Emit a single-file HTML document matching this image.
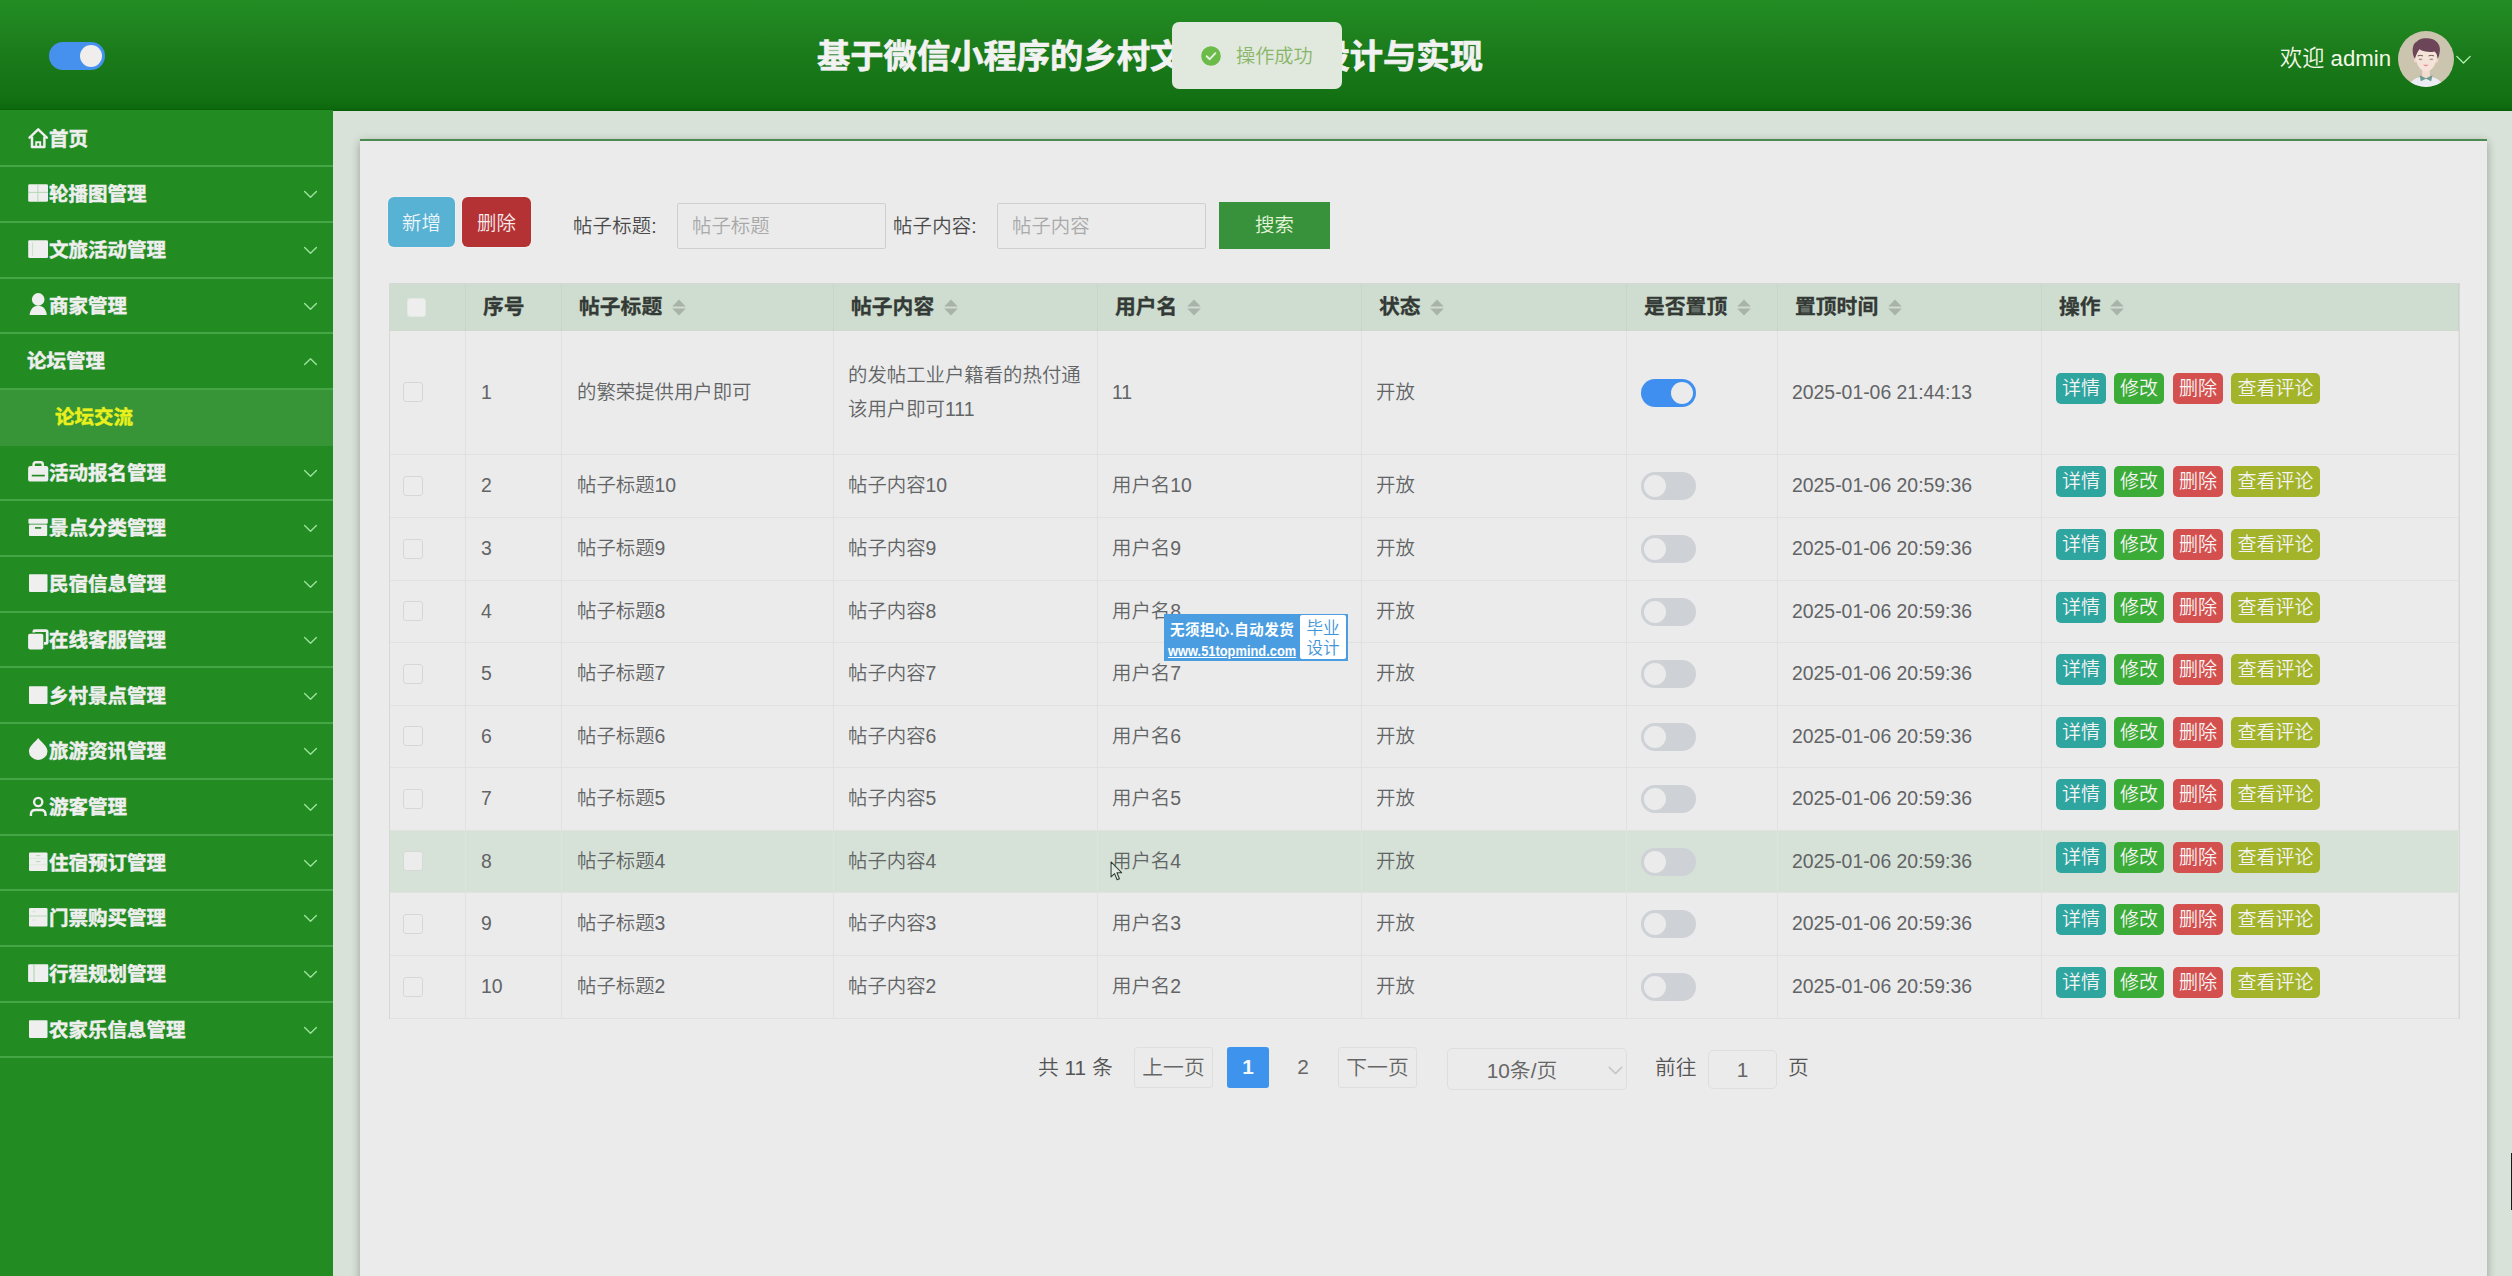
<!DOCTYPE html>
<html lang="zh-CN"><head><meta charset="utf-8"><title>论坛交流</title>
<style>
*{box-sizing:border-box;margin:0;padding:0}
html,body{width:2512px;height:1276px;overflow:hidden;background:#d8e2d8;font-family:"Liberation Sans","Noto Sans CJK SC",sans-serif;}
body{position:relative;font-size:19.4px;color:#606266;font-weight:350}
#root{position:absolute;left:0;top:0;width:2512px;height:1276px;overflow:hidden;background:#d8e2d8}
.abs{position:absolute}
#hdr{position:absolute;left:0;top:0;width:2512px;height:111px;background:linear-gradient(180deg,#238c23 0%,#228a22 10%,#1b7b1b 48%,#137113 88%,#0d690d 97.5%,#075a07 100%);}
#title{position:absolute;left:817px;top:32px;-webkit-text-stroke:0.7px #f2f2f2;height:50px;line-height:50px;font-size:33.3px;font-weight:bold;color:#f2f2f2;white-space:nowrap;letter-spacing:0}
#welcome{position:absolute;left:2280px;top:40px;height:38px;line-height:38px;font-size:22.2px;color:#f4f8e8;white-space:nowrap}
#avatar{position:absolute;left:2398px;top:31px;width:56px;height:56px}
.sw{position:absolute;border-radius:14px;width:55px;height:28px}
.sw i{position:absolute;top:3px;width:22px;height:22px;border-radius:50%;background:#ebebeb}
.sw.on{background:#3f8ff0}
.sw.on i{right:3px}
.sw.off{background:#ced1d6}
.sw.off i{left:3px}
#side{position:absolute;left:0;top:110px;width:333px;height:1166px;background:#228b22}
.mi{position:absolute;left:0;width:333px;height:56px;border-bottom:2px solid #45a645;color:#efefef;font-weight:bold;font-size:19.5px;white-space:nowrap;-webkit-text-stroke:0.45px #efefef}
.mi .ic{position:absolute;left:27.8px;top:13px;width:21px;height:24px}
.mi .tx{position:absolute;left:49px;top:0;line-height:55px;height:55px}
.mi .ch{position:absolute;left:303px;top:23px;width:15px;height:9px}
#sub{position:absolute;left:0;top:390px;width:333px;height:55px;background:#379537;color:#eaf01c;font-weight:bold;font-size:19.5px;-webkit-text-stroke:0.45px #eaf01c}
#sub span{position:absolute;left:55px;top:0;line-height:55px}
#card{position:absolute;left:360px;top:139px;width:2127px;height:1160px;background:#ebebeb;border-top:2px solid #4b8a50;box-shadow:0 3px 9px rgba(0,0,0,.3)}
.btn{position:absolute;color:#fff;text-align:center;white-space:nowrap}
.inp{position:absolute;height:46px;border:1px solid #cfcfcf;border-radius:2px;background:#ebebeb;color:#a9a9a9;font-size:19.4px;line-height:45px;padding-left:14px;white-space:nowrap}
.lbl{position:absolute;height:48px;line-height:48px;font-size:19.4px;color:#4a4a4a;letter-spacing:0.2px;white-space:nowrap}
#tbl{position:absolute;left:389px;top:283px;width:2071px;height:736px;border:1px solid #d6d8d6;}
.row{position:absolute;left:0;width:2069px;border-bottom:1px solid #e0e2e0}
.cell{position:absolute;top:0;height:100%;border-right:1px solid #e0e2e0}
.th{position:absolute;top:0;height:47px;line-height:46px;font-weight:bold;color:#343a36;-webkit-text-stroke:0.3px #343a36;font-size:20.8px;white-space:nowrap;border-right:1px solid #c8d5c9}
.th .t{position:absolute;left:17px;top:0}
.td{position:absolute;white-space:nowrap;font-size:19.4px;color:#626466;line-height:34px}
.cb{position:absolute;width:20px;height:20px;border:1px solid #d6d8d6;border-radius:3px;background:#ececec}
.ob{position:absolute;height:31px;line-height:31.5px;border-radius:5px;color:#f4f4f4;font-size:19px;text-align:center;white-space:nowrap}
.sort{position:absolute;top:15px;width:14px;height:17px}
.pg{position:absolute;white-space:nowrap;font-size:18px;color:#606266}
.pb{position:absolute;height:41px;line-height:40px;border:1px solid #dedede;border-radius:3px;text-align:center;font-size:20.8px;color:#666;white-space:nowrap}
</style></head>
<body>
<div id="root">
<div id="card"></div>
<div id="hdr"></div>
<div class="sw on" style="left:49px;top:42px;width:56px;height:27.5px;background:#4691ee"><i style="top:2.7px;right:2.6px;background:#f0eded"></i></div>
<div id="title">基于微信小程序的乡村文旅平台的设计与实现</div>
<div id="welcome">欢迎 admin</div>
<svg id="avatar" viewBox="0 0 56 56"><defs><clipPath id="avc"><circle cx="28" cy="28" r="28"/></clipPath></defs>
<g clip-path="url(#avc)"><rect width="56" height="56" fill="#cbc4ae"/>
<path d="M11 56 C12.5 49 18 46 28 45.6 C38 46 43.5 49 45 56 Z" fill="#ececf4"/>
<path d="M24.2 36 H31.8 V45.5 L28 48.5 L24.2 45.5 Z" fill="#f3dccf"/>
<path d="M21.6 44.2 L28 47.2 L34.4 44.2 L33.2 50.2 L28 47.8 L22.8 50.2 Z" fill="#6f9c92"/>
<ellipse cx="17.6" cy="29" rx="1.8" ry="2.6" fill="#f0d6ca"/><ellipse cx="38.6" cy="29" rx="1.8" ry="2.6" fill="#f0d6ca"/>
<path d="M17.6 24 C17.6 17 22 15 28.2 15 C34.4 15 38.8 17 38.8 24 C38.8 33 34.5 40.4 28.2 40.4 C21.9 40.4 17.6 33 17.6 24 Z" fill="#f5e3da"/>
<path d="M16.6 27.8 C13.4 21 14.2 12.5 19 10.6 C20.5 7.6 26.5 6.4 31.6 7.6 C38.6 8.6 43.4 14.5 41.6 21.6 C41.2 24.4 40.6 26.6 39.6 27.8 C39.4 24.2 38.4 21.6 36.4 20.4 C32 21.6 25.5 20.8 21.4 18.2 C19.6 20.4 18.2 24.2 16.6 27.8 Z" fill="#6d4558"/>
<path d="M19.6 24.9 Q22.3 23.8 25 24.9" fill="none" stroke="#6a5a50" stroke-width="1"/><path d="M30.6 24.9 Q33.3 23.8 36 24.9" fill="none" stroke="#6a5a50" stroke-width="1"/>
<ellipse cx="22.5" cy="28.3" rx="2" ry="0.9" fill="#a59c8c"/><ellipse cx="33.4" cy="28.3" rx="2" ry="0.9" fill="#a59c8c"/>
<path d="M25 33.4 Q27.8 34.2 30.6 33.4 Q27.8 37.2 25 33.4Z" fill="#e88c8c"/></g></svg>
<svg class="abs" style="left:2455px;top:54.5px;width:17px;height:10px" viewBox="0 0 17 10"><path d="M1.8 1.4 L8.5 8 L15.2 1.4" fill="none" stroke="#b4f4b4" stroke-width="1.3" stroke-linecap="round" stroke-linejoin="round"/></svg>
<div class="abs" style="left:1172px;top:22px;width:170px;height:67px;border-radius:7px;background:#e1e8dd"><svg class="abs" style="left:29px;top:24px;width:20px;height:20px" viewBox="0 0 20 20"><circle cx="10" cy="10" r="9.8" fill="#6abb48"/><path d="M5.6 10.2 L8.8 13.2 L14.4 7.2" fill="none" stroke="#e6f2e0" stroke-width="1.9" stroke-linecap="round" stroke-linejoin="round"/></svg><span class="abs" style="left:64px;top:1px;line-height:67px;font-size:19.2px;color:#88b668;white-space:nowrap">操作成功</span></div>
<div id="side">
<div class="mi" style="top:1.60px;height:55.69px"><svg class="ic" viewBox="0 0 21 24"><path d="M1.6 12.6 L10.2 4.4 L18.8 12.6" fill="none" stroke="#efefef" stroke-width="2.5" stroke-linecap="round" stroke-linejoin="round"/><path d="M4 11.6 V21.9 H16.4 V11.6" fill="none" stroke="#efefef" stroke-width="2.5" stroke-linejoin="round"/><path d="M8.2 21.6 V17.2 H12.2 V21.6" fill="none" stroke="#efefef" stroke-width="1.9"/></svg><span class="tx" style="left:49px">首页</span></div>
<div class="mi" style="top:57.29px;height:55.69px"><svg class="ic" viewBox="0 0 21 24"><rect x="0.2" y="4.2" width="19.8" height="17.6" rx="1.4" fill="#efefef"/><path d="M9.9 4.2 V21.8 M0.2 12.4 H20" stroke="#a6d2a6" stroke-width="0.8"/></svg><span class="tx" style="left:49px">轮播图管理</span><svg class="ch" viewBox="0 0 15 9"><path d="M1.6 1.4 L7.5 7.2 L13.4 1.4" fill="none" stroke="#9be39b" stroke-width="1.4" stroke-linecap="round" stroke-linejoin="round"/></svg></div>
<div class="mi" style="top:112.98px;height:55.69px"><svg class="ic" viewBox="0 0 21 24"><rect x="0.2" y="4.2" width="19.8" height="17.8" rx="1.2" fill="#efefef"/><path d="M4.6 6.5 V20" stroke="#bcdcbc" stroke-width="0.8"/></svg><span class="tx" style="left:49px">文旅活动管理</span><svg class="ch" viewBox="0 0 15 9"><path d="M1.6 1.4 L7.5 7.2 L13.4 1.4" fill="none" stroke="#9be39b" stroke-width="1.4" stroke-linecap="round" stroke-linejoin="round"/></svg></div>
<div class="mi" style="top:168.67px;height:55.69px"><svg class="ic" viewBox="0 0 21 24"><circle cx="10.2" cy="7.4" r="6.3" fill="#efefef"/><path d="M1.6 22.9 C2.2 17 5.6 13.8 10.2 13.8 C14.8 13.8 18.2 17 18.8 22.9 Z" fill="#efefef"/></svg><span class="tx" style="left:49px">商家管理</span><svg class="ch" viewBox="0 0 15 9"><path d="M1.6 1.4 L7.5 7.2 L13.4 1.4" fill="none" stroke="#9be39b" stroke-width="1.4" stroke-linecap="round" stroke-linejoin="round"/></svg></div>
<div class="mi" style="top:224.36px;height:55.69px"><span class="tx" style="left:27px">论坛管理</span><svg class="ch" viewBox="0 0 15 9"><path d="M1.6 7.6 L7.5 1.8 L13.4 7.6" fill="none" stroke="#9be39b" stroke-width="1.4" stroke-linecap="round" stroke-linejoin="round"/></svg></div>
<div id="sub" style="top:280.05px;height:55.69px"><span>论坛交流</span></div>
<div class="mi" style="top:335.74px;height:55.69px"><svg class="ic" viewBox="0 0 21 24"><path d="M5.6 8 V5.4 Q5.6 3.2 7.8 3.2 H12.6 Q14.8 3.2 14.8 5.4 V8" fill="none" stroke="#efefef" stroke-width="2.4"/><rect x="0.1" y="7" width="20.2" height="15.6" rx="2.2" fill="#efefef"/><path d="M3.8 16.6 H16.8" stroke="#228b22" stroke-width="1.7"/></svg><span class="tx" style="left:49px">活动报名管理</span><svg class="ch" viewBox="0 0 15 9"><path d="M1.6 1.4 L7.5 7.2 L13.4 1.4" fill="none" stroke="#9be39b" stroke-width="1.4" stroke-linecap="round" stroke-linejoin="round"/></svg></div>
<div class="mi" style="top:391.43px;height:55.69px"><svg class="ic" viewBox="0 0 21 24"><rect x="0.4" y="4.7" width="19.4" height="5" rx="1" fill="#efefef"/><rect x="1" y="10.6" width="18.2" height="11.4" rx="1" fill="#efefef"/><path d="M7 13.9 H13.2" stroke="#228b22" stroke-width="1.6"/></svg><span class="tx" style="left:49px">景点分类管理</span><svg class="ch" viewBox="0 0 15 9"><path d="M1.6 1.4 L7.5 7.2 L13.4 1.4" fill="none" stroke="#9be39b" stroke-width="1.4" stroke-linecap="round" stroke-linejoin="round"/></svg></div>
<div class="mi" style="top:447.12px;height:55.69px"><svg class="ic" viewBox="0 0 21 24"><rect x="1" y="4.2" width="18.5" height="17.7" rx="0.8" fill="#efefef"/></svg><span class="tx" style="left:49px">民宿信息管理</span><svg class="ch" viewBox="0 0 15 9"><path d="M1.6 1.4 L7.5 7.2 L13.4 1.4" fill="none" stroke="#9be39b" stroke-width="1.4" stroke-linecap="round" stroke-linejoin="round"/></svg></div>
<div class="mi" style="top:502.81px;height:55.69px"><svg class="ic" viewBox="0 0 21 24"><path d="M5.8 6.6 V5.6 Q5.8 4.6 6.8 4.6 H18 Q19.2 4.6 19.2 5.8 V16.4 Q19.2 17.4 18.2 17.4 H16" fill="none" stroke="#efefef" stroke-width="2.7"/><rect x="0.1" y="7.8" width="15.2" height="15.6" rx="1.8" fill="#efefef"/></svg><span class="tx" style="left:49px">在线客服管理</span><svg class="ch" viewBox="0 0 15 9"><path d="M1.6 1.4 L7.5 7.2 L13.4 1.4" fill="none" stroke="#9be39b" stroke-width="1.4" stroke-linecap="round" stroke-linejoin="round"/></svg></div>
<div class="mi" style="top:558.50px;height:55.69px"><svg class="ic" viewBox="0 0 21 24"><rect x="1" y="4.2" width="18.5" height="17.7" rx="0.8" fill="#efefef"/></svg><span class="tx" style="left:49px">乡村景点管理</span><svg class="ch" viewBox="0 0 15 9"><path d="M1.6 1.4 L7.5 7.2 L13.4 1.4" fill="none" stroke="#9be39b" stroke-width="1.4" stroke-linecap="round" stroke-linejoin="round"/></svg></div>
<div class="mi" style="top:614.19px;height:55.69px"><svg class="ic" viewBox="0 0 21 24"><path d="M10.2 1 C13.6 5.4 19.5 9.4 19.5 14.2 A9.3 8.7 0 0 1 0.9 14.2 C0.9 9.4 6.8 5.4 10.2 1 Z" fill="#efefef"/></svg><span class="tx" style="left:49px">旅游资讯管理</span><svg class="ch" viewBox="0 0 15 9"><path d="M1.6 1.4 L7.5 7.2 L13.4 1.4" fill="none" stroke="#9be39b" stroke-width="1.4" stroke-linecap="round" stroke-linejoin="round"/></svg></div>
<div class="mi" style="top:669.88px;height:55.69px"><svg class="ic" viewBox="0 0 21 24"><circle cx="10.2" cy="9" r="4.1" fill="none" stroke="#efefef" stroke-width="2.4"/><path d="M2.9 23.1 V21.4 Q2.9 17 7.3 17 H13.1 Q17.5 17 17.5 21.4 V23.1" fill="none" stroke="#efefef" stroke-width="2.4"/></svg><span class="tx" style="left:49px">游客管理</span><svg class="ch" viewBox="0 0 15 9"><path d="M1.6 1.4 L7.5 7.2 L13.4 1.4" fill="none" stroke="#9be39b" stroke-width="1.4" stroke-linecap="round" stroke-linejoin="round"/></svg></div>
<div class="mi" style="top:725.57px;height:55.69px"><svg class="ic" viewBox="0 0 21 24"><rect x="1" y="3.6" width="18.5" height="18.4" rx="1" fill="#efefef"/><path d="M1 9.6 H19.5 M1 15.8 H19.5" stroke="#d2e8d2" stroke-width="0.8"/><path d="M8 6.6 H12.4 M8 12.6 H12.4" stroke="#b4d8b4" stroke-width="1"/></svg><span class="tx" style="left:49px">住宿预订管理</span><svg class="ch" viewBox="0 0 15 9"><path d="M1.6 1.4 L7.5 7.2 L13.4 1.4" fill="none" stroke="#9be39b" stroke-width="1.4" stroke-linecap="round" stroke-linejoin="round"/></svg></div>
<div class="mi" style="top:781.26px;height:55.69px"><svg class="ic" viewBox="0 0 21 24"><rect x="1" y="3.9" width="18.5" height="18.6" rx="1.2" fill="#efefef"/><path d="M1 12 H19.5" stroke="#b4d8b4" stroke-width="0.9"/><path d="M4.6 7.8 H7 M4.6 16 H7" stroke="#c8e2c8" stroke-width="0.9"/></svg><span class="tx" style="left:49px">门票购买管理</span><svg class="ch" viewBox="0 0 15 9"><path d="M1.6 1.4 L7.5 7.2 L13.4 1.4" fill="none" stroke="#9be39b" stroke-width="1.4" stroke-linecap="round" stroke-linejoin="round"/></svg></div>
<div class="mi" style="top:836.95px;height:55.69px"><svg class="ic" viewBox="0 0 21 24"><rect x="0.1" y="4.2" width="20.2" height="17.7" rx="1.2" fill="#efefef"/><path d="M6 4.2 V21.9" stroke="#9fd09f" stroke-width="0.9"/></svg><span class="tx" style="left:49px">行程规划管理</span><svg class="ch" viewBox="0 0 15 9"><path d="M1.6 1.4 L7.5 7.2 L13.4 1.4" fill="none" stroke="#9be39b" stroke-width="1.4" stroke-linecap="round" stroke-linejoin="round"/></svg></div>
<div class="mi" style="top:892.64px;height:55.69px"><svg class="ic" viewBox="0 0 21 24"><rect x="1" y="4.2" width="18.5" height="17.7" rx="0.8" fill="#efefef"/></svg><span class="tx" style="left:49px">农家乐信息管理</span><svg class="ch" viewBox="0 0 15 9"><path d="M1.6 1.4 L7.5 7.2 L13.4 1.4" fill="none" stroke="#9be39b" stroke-width="1.4" stroke-linecap="round" stroke-linejoin="round"/></svg></div>
</div>
<div class="btn" style="left:388px;top:197px;width:67px;height:50px;line-height:52px;border-radius:6px;background:#58b2d3;box-shadow:0 0 2px rgba(255,255,255,.8);font-size:19.4px;color:#eef6fa">新增</div>
<div class="btn" style="left:462px;top:197px;width:69px;height:50px;line-height:52px;border-radius:6px;background:#b53234;box-shadow:0 0 2px rgba(255,255,255,.8);font-size:19.4px;color:#f6eaea">删除</div>
<div class="lbl" style="left:573px;top:202px">帖子标题:</div>
<div class="inp" style="left:677px;top:203px;width:209px">帖子标题</div>
<div class="lbl" style="left:893px;top:202px">帖子内容:</div>
<div class="inp" style="left:997px;top:203px;width:209px">帖子内容</div>
<div class="btn" style="left:1219px;top:202px;width:111px;height:47px;line-height:47px;background:#37923b;font-size:19.4px;color:#e4f4d8">搜索</div>
<div id="tbl">
<div class="row" style="top:0;height:47px;background:#cfddd0;border-bottom:1px solid #cfd9d0"><div class="th" style="left:0px;width:76px"><div class="cb" style="left:17px;top:14px;width:19px;height:19px;border-color:#e4e8e4;background:#eeeeee"></div></div><div class="th" style="left:76px;width:96px"><span class="t">序号</span></div><div class="th" style="left:172px;width:272px"><span class="t">帖子标题</span><svg class="sort" style="left:109.7px" viewBox="0 0 14 17"><path d="M7 0.4 L13.8 7.4 H0.2Z" fill="#a9b3aa"/><path d="M7 16.6 L13.8 9.6 H0.2Z" fill="#a9b3aa"/></svg></div><div class="th" style="left:444px;width:264px"><span class="t">帖子内容</span><svg class="sort" style="left:109.7px" viewBox="0 0 14 17"><path d="M7 0.4 L13.8 7.4 H0.2Z" fill="#a9b3aa"/><path d="M7 16.6 L13.8 9.6 H0.2Z" fill="#a9b3aa"/></svg></div><div class="th" style="left:708px;width:264px"><span class="t">用户名</span><svg class="sort" style="left:88.9px" viewBox="0 0 14 17"><path d="M7 0.4 L13.8 7.4 H0.2Z" fill="#a9b3aa"/><path d="M7 16.6 L13.8 9.6 H0.2Z" fill="#a9b3aa"/></svg></div><div class="th" style="left:972px;width:265px"><span class="t">状态</span><svg class="sort" style="left:68.1px" viewBox="0 0 14 17"><path d="M7 0.4 L13.8 7.4 H0.2Z" fill="#a9b3aa"/><path d="M7 16.6 L13.8 9.6 H0.2Z" fill="#a9b3aa"/></svg></div><div class="th" style="left:1237px;width:151px"><span class="t">是否置顶</span><svg class="sort" style="left:109.7px" viewBox="0 0 14 17"><path d="M7 0.4 L13.8 7.4 H0.2Z" fill="#a9b3aa"/><path d="M7 16.6 L13.8 9.6 H0.2Z" fill="#a9b3aa"/></svg></div><div class="th" style="left:1388px;width:264px"><span class="t">置顶时间</span><svg class="sort" style="left:109.7px" viewBox="0 0 14 17"><path d="M7 0.4 L13.8 7.4 H0.2Z" fill="#a9b3aa"/><path d="M7 16.6 L13.8 9.6 H0.2Z" fill="#a9b3aa"/></svg></div><div class="th" style="left:1652px;width:417px"><span class="t">操作</span><svg class="sort" style="left:68.1px" viewBox="0 0 14 17"><path d="M7 0.4 L13.8 7.4 H0.2Z" fill="#a9b3aa"/><path d="M7 16.6 L13.8 9.6 H0.2Z" fill="#a9b3aa"/></svg></div></div>
<div class="row" style="top:47px;height:124px;"><div class="cell" style="left:0px;width:76px"></div><div class="cell" style="left:76px;width:96px"></div><div class="cell" style="left:172px;width:272px"></div><div class="cell" style="left:444px;width:264px"></div><div class="cell" style="left:708px;width:264px"></div><div class="cell" style="left:972px;width:265px"></div><div class="cell" style="left:1237px;width:151px"></div><div class="cell" style="left:1388px;width:264px"></div><div class="cell" style="left:1652px;width:417px"></div><div class="cb" style="left:13px;top:51.0px"></div><div class="td" style="left:91px;top:43.5px">1</div><div class="td" style="left:187px;top:43.5px">的繁荣提供用户即可</div><div class="td" style="left:458px;top:26.5px">的发帖工业户籍看的热付通<br>该用户即可111</div><div class="td" style="left:722px;top:43.5px">11</div><div class="td" style="left:986px;top:43.5px">开放</div><div class="sw on" style="left:1251px;top:47.5px"><i></i></div><div class="td" style="left:1402px;top:43.5px">2025-01-06 21:44:13</div><div class="ob" style="left:1666px;top:41.5px;width:50px;background:#2fa5a0">详情</div><div class="ob" style="left:1724px;top:41.5px;width:50px;background:#3bac37">修改</div><div class="ob" style="left:1783px;top:41.5px;width:50px;background:#d4504f">删除</div><div class="ob" style="left:1841px;top:41.5px;width:89px;background:#a3b42a">查看评论</div></div>
<div class="row" style="top:171px;height:63px;"><div class="cell" style="left:0px;width:76px"></div><div class="cell" style="left:76px;width:96px"></div><div class="cell" style="left:172px;width:272px"></div><div class="cell" style="left:444px;width:264px"></div><div class="cell" style="left:708px;width:264px"></div><div class="cell" style="left:972px;width:265px"></div><div class="cell" style="left:1237px;width:151px"></div><div class="cell" style="left:1388px;width:264px"></div><div class="cell" style="left:1652px;width:417px"></div><div class="cb" style="left:13px;top:20.5px"></div><div class="td" style="left:91px;top:13.0px">2</div><div class="td" style="left:187px;top:13.0px">帖子标题10</div><div class="td" style="left:458px;top:13.0px">帖子内容10</div><div class="td" style="left:722px;top:13.0px">用户名10</div><div class="td" style="left:986px;top:13.0px">开放</div><div class="sw off" style="left:1251px;top:17.0px"><i></i></div><div class="td" style="left:1402px;top:13.0px">2025-01-06 20:59:36</div><div class="ob" style="left:1666px;top:11.0px;width:50px;background:#2fa5a0">详情</div><div class="ob" style="left:1724px;top:11.0px;width:50px;background:#3bac37">修改</div><div class="ob" style="left:1783px;top:11.0px;width:50px;background:#d4504f">删除</div><div class="ob" style="left:1841px;top:11.0px;width:89px;background:#a3b42a">查看评论</div></div>
<div class="row" style="top:234px;height:63px;"><div class="cell" style="left:0px;width:76px"></div><div class="cell" style="left:76px;width:96px"></div><div class="cell" style="left:172px;width:272px"></div><div class="cell" style="left:444px;width:264px"></div><div class="cell" style="left:708px;width:264px"></div><div class="cell" style="left:972px;width:265px"></div><div class="cell" style="left:1237px;width:151px"></div><div class="cell" style="left:1388px;width:264px"></div><div class="cell" style="left:1652px;width:417px"></div><div class="cb" style="left:13px;top:20.5px"></div><div class="td" style="left:91px;top:13.0px">3</div><div class="td" style="left:187px;top:13.0px">帖子标题9</div><div class="td" style="left:458px;top:13.0px">帖子内容9</div><div class="td" style="left:722px;top:13.0px">用户名9</div><div class="td" style="left:986px;top:13.0px">开放</div><div class="sw off" style="left:1251px;top:17.0px"><i></i></div><div class="td" style="left:1402px;top:13.0px">2025-01-06 20:59:36</div><div class="ob" style="left:1666px;top:11.0px;width:50px;background:#2fa5a0">详情</div><div class="ob" style="left:1724px;top:11.0px;width:50px;background:#3bac37">修改</div><div class="ob" style="left:1783px;top:11.0px;width:50px;background:#d4504f">删除</div><div class="ob" style="left:1841px;top:11.0px;width:89px;background:#a3b42a">查看评论</div></div>
<div class="row" style="top:297px;height:62px;"><div class="cell" style="left:0px;width:76px"></div><div class="cell" style="left:76px;width:96px"></div><div class="cell" style="left:172px;width:272px"></div><div class="cell" style="left:444px;width:264px"></div><div class="cell" style="left:708px;width:264px"></div><div class="cell" style="left:972px;width:265px"></div><div class="cell" style="left:1237px;width:151px"></div><div class="cell" style="left:1388px;width:264px"></div><div class="cell" style="left:1652px;width:417px"></div><div class="cb" style="left:13px;top:20.0px"></div><div class="td" style="left:91px;top:12.5px">4</div><div class="td" style="left:187px;top:12.5px">帖子标题8</div><div class="td" style="left:458px;top:12.5px">帖子内容8</div><div class="td" style="left:722px;top:12.5px">用户名8</div><div class="td" style="left:986px;top:12.5px">开放</div><div class="sw off" style="left:1251px;top:16.5px"><i></i></div><div class="td" style="left:1402px;top:12.5px">2025-01-06 20:59:36</div><div class="ob" style="left:1666px;top:10.5px;width:50px;background:#2fa5a0">详情</div><div class="ob" style="left:1724px;top:10.5px;width:50px;background:#3bac37">修改</div><div class="ob" style="left:1783px;top:10.5px;width:50px;background:#d4504f">删除</div><div class="ob" style="left:1841px;top:10.5px;width:89px;background:#a3b42a">查看评论</div></div>
<div class="row" style="top:359px;height:63px;"><div class="cell" style="left:0px;width:76px"></div><div class="cell" style="left:76px;width:96px"></div><div class="cell" style="left:172px;width:272px"></div><div class="cell" style="left:444px;width:264px"></div><div class="cell" style="left:708px;width:264px"></div><div class="cell" style="left:972px;width:265px"></div><div class="cell" style="left:1237px;width:151px"></div><div class="cell" style="left:1388px;width:264px"></div><div class="cell" style="left:1652px;width:417px"></div><div class="cb" style="left:13px;top:20.5px"></div><div class="td" style="left:91px;top:13.0px">5</div><div class="td" style="left:187px;top:13.0px">帖子标题7</div><div class="td" style="left:458px;top:13.0px">帖子内容7</div><div class="td" style="left:722px;top:13.0px">用户名7</div><div class="td" style="left:986px;top:13.0px">开放</div><div class="sw off" style="left:1251px;top:17.0px"><i></i></div><div class="td" style="left:1402px;top:13.0px">2025-01-06 20:59:36</div><div class="ob" style="left:1666px;top:11.0px;width:50px;background:#2fa5a0">详情</div><div class="ob" style="left:1724px;top:11.0px;width:50px;background:#3bac37">修改</div><div class="ob" style="left:1783px;top:11.0px;width:50px;background:#d4504f">删除</div><div class="ob" style="left:1841px;top:11.0px;width:89px;background:#a3b42a">查看评论</div></div>
<div class="row" style="top:422px;height:62px;"><div class="cell" style="left:0px;width:76px"></div><div class="cell" style="left:76px;width:96px"></div><div class="cell" style="left:172px;width:272px"></div><div class="cell" style="left:444px;width:264px"></div><div class="cell" style="left:708px;width:264px"></div><div class="cell" style="left:972px;width:265px"></div><div class="cell" style="left:1237px;width:151px"></div><div class="cell" style="left:1388px;width:264px"></div><div class="cell" style="left:1652px;width:417px"></div><div class="cb" style="left:13px;top:20.0px"></div><div class="td" style="left:91px;top:12.5px">6</div><div class="td" style="left:187px;top:12.5px">帖子标题6</div><div class="td" style="left:458px;top:12.5px">帖子内容6</div><div class="td" style="left:722px;top:12.5px">用户名6</div><div class="td" style="left:986px;top:12.5px">开放</div><div class="sw off" style="left:1251px;top:16.5px"><i></i></div><div class="td" style="left:1402px;top:12.5px">2025-01-06 20:59:36</div><div class="ob" style="left:1666px;top:10.5px;width:50px;background:#2fa5a0">详情</div><div class="ob" style="left:1724px;top:10.5px;width:50px;background:#3bac37">修改</div><div class="ob" style="left:1783px;top:10.5px;width:50px;background:#d4504f">删除</div><div class="ob" style="left:1841px;top:10.5px;width:89px;background:#a3b42a">查看评论</div></div>
<div class="row" style="top:484px;height:63px;"><div class="cell" style="left:0px;width:76px"></div><div class="cell" style="left:76px;width:96px"></div><div class="cell" style="left:172px;width:272px"></div><div class="cell" style="left:444px;width:264px"></div><div class="cell" style="left:708px;width:264px"></div><div class="cell" style="left:972px;width:265px"></div><div class="cell" style="left:1237px;width:151px"></div><div class="cell" style="left:1388px;width:264px"></div><div class="cell" style="left:1652px;width:417px"></div><div class="cb" style="left:13px;top:20.5px"></div><div class="td" style="left:91px;top:13.0px">7</div><div class="td" style="left:187px;top:13.0px">帖子标题5</div><div class="td" style="left:458px;top:13.0px">帖子内容5</div><div class="td" style="left:722px;top:13.0px">用户名5</div><div class="td" style="left:986px;top:13.0px">开放</div><div class="sw off" style="left:1251px;top:17.0px"><i></i></div><div class="td" style="left:1402px;top:13.0px">2025-01-06 20:59:36</div><div class="ob" style="left:1666px;top:11.0px;width:50px;background:#2fa5a0">详情</div><div class="ob" style="left:1724px;top:11.0px;width:50px;background:#3bac37">修改</div><div class="ob" style="left:1783px;top:11.0px;width:50px;background:#d4504f">删除</div><div class="ob" style="left:1841px;top:11.0px;width:89px;background:#a3b42a">查看评论</div></div>
<div class="row" style="top:547px;height:62px;background:#d6e2d7;"><div class="cell" style="left:0px;width:76px"></div><div class="cell" style="left:76px;width:96px"></div><div class="cell" style="left:172px;width:272px"></div><div class="cell" style="left:444px;width:264px"></div><div class="cell" style="left:708px;width:264px"></div><div class="cell" style="left:972px;width:265px"></div><div class="cell" style="left:1237px;width:151px"></div><div class="cell" style="left:1388px;width:264px"></div><div class="cell" style="left:1652px;width:417px"></div><div class="cb" style="left:13px;top:20.0px"></div><div class="td" style="left:91px;top:12.5px">8</div><div class="td" style="left:187px;top:12.5px">帖子标题4</div><div class="td" style="left:458px;top:12.5px">帖子内容4</div><div class="td" style="left:722px;top:12.5px">用户名4</div><div class="td" style="left:986px;top:12.5px">开放</div><div class="sw off" style="left:1251px;top:16.5px"><i></i></div><div class="td" style="left:1402px;top:12.5px">2025-01-06 20:59:36</div><div class="ob" style="left:1666px;top:10.5px;width:50px;background:#2fa5a0">详情</div><div class="ob" style="left:1724px;top:10.5px;width:50px;background:#3bac37">修改</div><div class="ob" style="left:1783px;top:10.5px;width:50px;background:#d4504f">删除</div><div class="ob" style="left:1841px;top:10.5px;width:89px;background:#a3b42a">查看评论</div></div>
<div class="row" style="top:609px;height:63px;"><div class="cell" style="left:0px;width:76px"></div><div class="cell" style="left:76px;width:96px"></div><div class="cell" style="left:172px;width:272px"></div><div class="cell" style="left:444px;width:264px"></div><div class="cell" style="left:708px;width:264px"></div><div class="cell" style="left:972px;width:265px"></div><div class="cell" style="left:1237px;width:151px"></div><div class="cell" style="left:1388px;width:264px"></div><div class="cell" style="left:1652px;width:417px"></div><div class="cb" style="left:13px;top:20.5px"></div><div class="td" style="left:91px;top:13.0px">9</div><div class="td" style="left:187px;top:13.0px">帖子标题3</div><div class="td" style="left:458px;top:13.0px">帖子内容3</div><div class="td" style="left:722px;top:13.0px">用户名3</div><div class="td" style="left:986px;top:13.0px">开放</div><div class="sw off" style="left:1251px;top:17.0px"><i></i></div><div class="td" style="left:1402px;top:13.0px">2025-01-06 20:59:36</div><div class="ob" style="left:1666px;top:11.0px;width:50px;background:#2fa5a0">详情</div><div class="ob" style="left:1724px;top:11.0px;width:50px;background:#3bac37">修改</div><div class="ob" style="left:1783px;top:11.0px;width:50px;background:#d4504f">删除</div><div class="ob" style="left:1841px;top:11.0px;width:89px;background:#a3b42a">查看评论</div></div>
<div class="row" style="top:672px;height:63px;"><div class="cell" style="left:0px;width:76px"></div><div class="cell" style="left:76px;width:96px"></div><div class="cell" style="left:172px;width:272px"></div><div class="cell" style="left:444px;width:264px"></div><div class="cell" style="left:708px;width:264px"></div><div class="cell" style="left:972px;width:265px"></div><div class="cell" style="left:1237px;width:151px"></div><div class="cell" style="left:1388px;width:264px"></div><div class="cell" style="left:1652px;width:417px"></div><div class="cb" style="left:13px;top:20.5px"></div><div class="td" style="left:91px;top:13.0px">10</div><div class="td" style="left:187px;top:13.0px">帖子标题2</div><div class="td" style="left:458px;top:13.0px">帖子内容2</div><div class="td" style="left:722px;top:13.0px">用户名2</div><div class="td" style="left:986px;top:13.0px">开放</div><div class="sw off" style="left:1251px;top:17.0px"><i></i></div><div class="td" style="left:1402px;top:13.0px">2025-01-06 20:59:36</div><div class="ob" style="left:1666px;top:11.0px;width:50px;background:#2fa5a0">详情</div><div class="ob" style="left:1724px;top:11.0px;width:50px;background:#3bac37">修改</div><div class="ob" style="left:1783px;top:11.0px;width:50px;background:#d4504f">删除</div><div class="ob" style="left:1841px;top:11.0px;width:89px;background:#a3b42a">查看评论</div></div>
</div>
<div class="pg" style="left:1038px;top:1047px;line-height:41px;font-size:20.8px;color:#555">共 11 条</div>
<div class="pb" style="left:1134px;top:1047px;width:79px">上一页</div>
<div class="pb" style="left:1227px;top:1046.5px;width:42px;height:41px;border:0;background:#3e93ec;color:#f4f8ff;font-weight:bold">1</div>
<div class="pb" style="left:1282px;top:1047px;width:42px;border:0;font-size:20.8px">2</div>
<div class="pb" style="left:1338px;top:1047px;width:79px">下一页</div>
<div class="pb" style="left:1447px;top:1048px;width:180px;height:42px;line-height:44px;border-radius:5px;padding-right:30px">10条/页<svg class="abs" style="left:160px;top:17px;width:15px;height:9px" viewBox="0 0 15 9"><path d="M1.2 1.2 L7.5 7.5 L13.8 1.2" fill="none" stroke="#c0c4c4" stroke-width="1.5" stroke-linecap="round" stroke-linejoin="round"/></svg></div>
<div class="pg" style="left:1655px;top:1047px;line-height:41px;font-size:20.8px;color:#555">前往</div>
<div class="pb" style="left:1708px;top:1050px;width:69px;height:39px;line-height:37px;border-radius:5px">1</div>
<div class="pg" style="left:1788px;top:1047px;line-height:41px;font-size:20.8px;color:#555">页</div>
<div class="abs" style="left:1164px;top:614px;width:184px;height:47px;background:#4a9de0"><span class="abs" style="left:6px;top:6px;font-size:14.5px;line-height:20px;font-weight:bold;color:#fff;white-space:nowrap;letter-spacing:0.45px">无须担心.自动发货</span><span class="abs" style="left:4px;top:27px;font-size:14.6px;line-height:20px;font-weight:bold;color:#fff;white-space:nowrap;text-decoration:underline;transform:scaleX(0.882);transform-origin:0 0">www.51topmind.com</span><div class="abs" style="left:136px;top:1px;width:46px;height:44px;background:#fff;border-radius:2px;color:#3f94d8;font-size:16.6px;line-height:19.5px;text-align:center;padding-top:4px">毕业<br>设计</div></div>
<svg class="abs" style="left:1109.6px;top:860.8px;width:14px;height:21px" viewBox="0 0 15 23"><path d="M1 1 L1 17.5 L4.8 13.8 L7.6 20.6 L10.2 19.5 L7.4 12.8 L12.6 12.8 Z" fill="#e4ebe4" fill-opacity="0.85" stroke="#2c3a2e" stroke-width="1.1" stroke-linejoin="round"/></svg>
<div class="abs" style="left:2510.7px;top:1152.5px;width:1.3px;height:57px;background:#1c1c1c"></div>
</div>
<script>(function(){var w=window.innerWidth||2512;if(w&&Math.abs(w-2512)>1){var k=w/2512,r=document.getElementById("root"),d=document.documentElement,b=document.body;r.style.transformOrigin="0 0";r.style.transform="scale("+k+")";d.style.width=b.style.width=w+"px";d.style.height=b.style.height=Math.round(1276*k)+"px";}})();</script>
</body></html>
